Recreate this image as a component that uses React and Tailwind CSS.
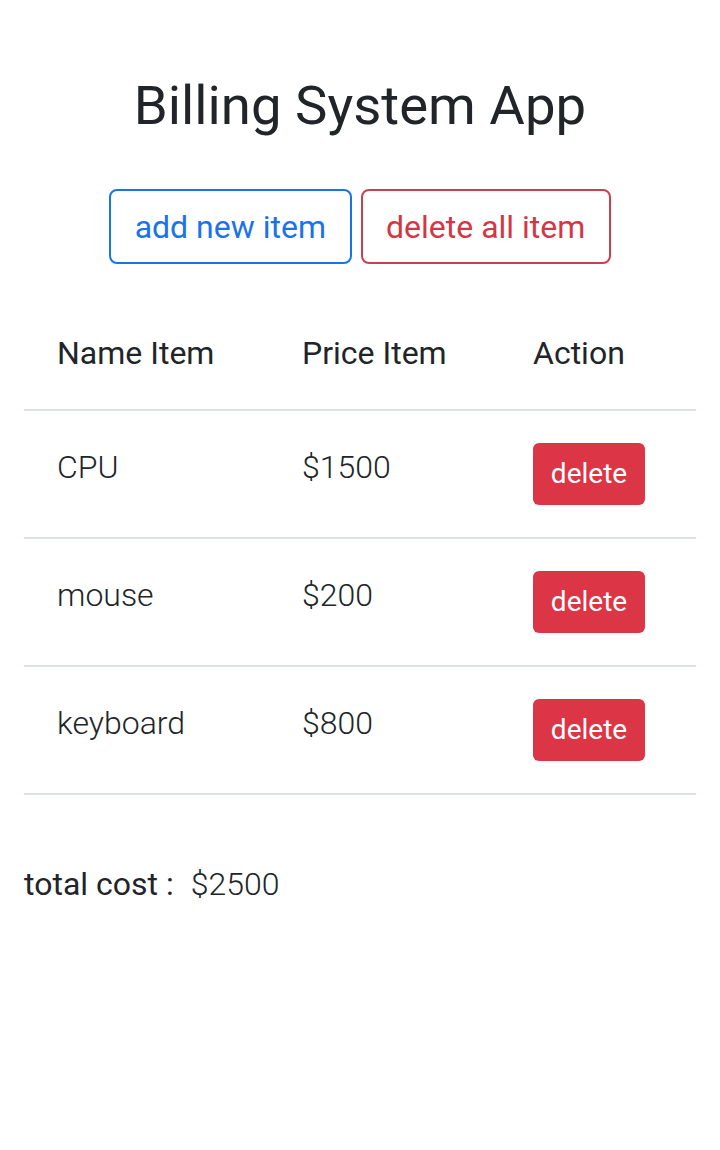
import React, { useState } from "react";

const initialItems = [
  { id: 1, name: "CPU", price: 1500 },
  { id: 2, name: "mouse", price: 200 },
  { id: 3, name: "keyboard", price: 800 },
];

const App = () => {
  const [items, setItems] = useState(initialItems);

  const total = items.reduce((sum, item) => sum + item.price, 0);

  const removeItem = (id) => setItems(items.filter((item) => item.id !== id));

  return (
    <div className="min-h-[1150px] bg-white text-[#212529] font-['Roboto',sans-serif] px-[24px] pt-[73px]">
      <h1 className="text-center text-[54.5px] leading-[1.2] font-normal">Billing System App</h1>

      <div className="flex justify-center gap-[9px] mt-[51px]">
        <button className="border-2 border-[#1a73e8] text-[#1a73e8] rounded-[8px] px-[23.5px] h-[75px] text-[32px] leading-[1.5]">
          add new item
        </button>
        <button
          onClick={() => setItems([])}
          className="border-2 border-[#c9404f] text-[#d23746] rounded-[8px] px-[23.5px] h-[75px] text-[32px] leading-[1.5]"
        >
          delete all item
        </button>
      </div>

      <div className="mt-[31px]">
        <div className="grid grid-cols-[245px_231px_1fr] border-b-2 border-[#dee2e6] text-[32px] leading-[1.5]">
          <div className="px-[33px] pt-[34px] pb-[32px]">Name Item</div>
          <div className="px-[33px] pt-[34px] pb-[32px]">Price Item</div>
          <div className="px-[33px] pt-[34px] pb-[32px]">Action</div>
        </div>
        {items.map((item) => (
          <div
            key={item.id}
            className="grid grid-cols-[245px_231px_1fr] items-start border-b-2 border-[#dee2e6] text-[32px] leading-[1.5] font-light"
          >
            <div className="px-[33px] pt-[32px]">{item.name}</div>
            <div className="px-[33px] pt-[32px]">${item.price}</div>
            <div className="px-[33px] py-[32px]">
              <button
                onClick={() => removeItem(item.id)}
                className="bg-[#dc3545] text-white rounded-[6px] w-[112px] h-[62px] text-[28px] font-normal"
              >
                delete
              </button>
            </div>
          </div>
        ))}
      </div>

      <p className="mt-[65px] text-[32px] leading-[1.5]">
        total cost :<span className="font-light ml-[17px]">${total}</span>
      </p>
    </div>
  );
};

export default App;
